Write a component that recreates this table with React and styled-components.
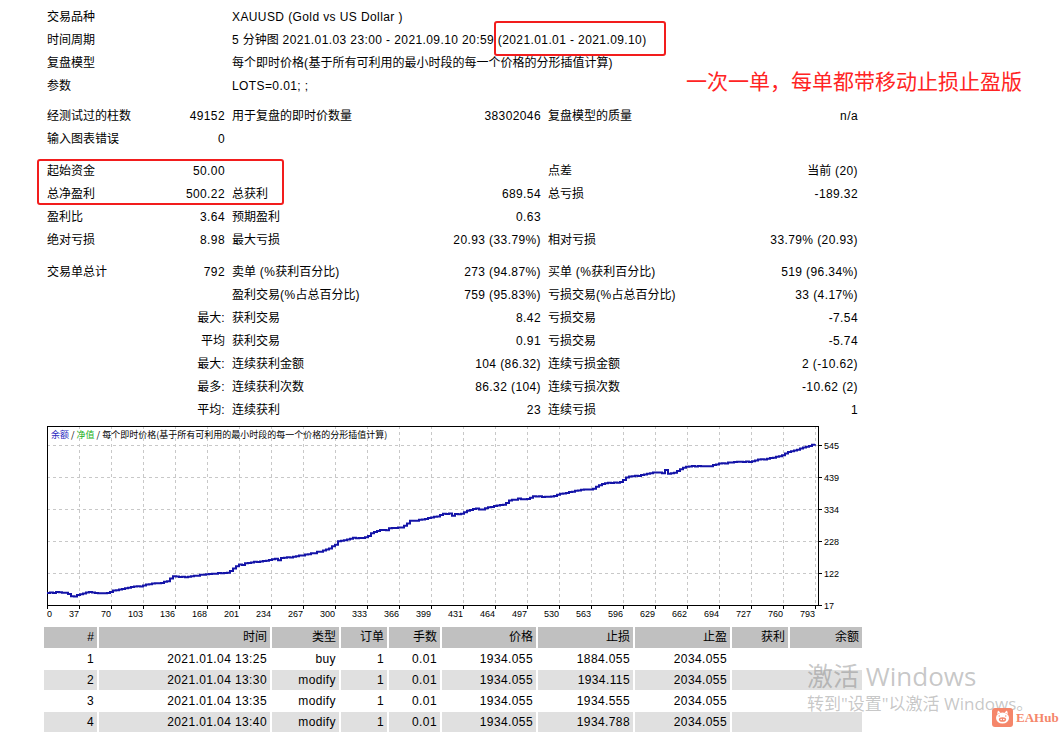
import React from 'react';
import styled, { createGlobalStyle } from 'styled-components';

const Global = createGlobalStyle`
  html, body { margin: 0; padding: 0; background: #fff; }
  body { font-family: "Liberation Sans", "Noto Sans CJK SC", sans-serif; font-size: 12px; color: #000; }
`;

const Page = styled.div`
  position: relative;
  width: 1062px;
  height: 734px;
  overflow: hidden;
  box-sizing: border-box;
  padding: 6px 0 0 44px;
  background: #fff;
`;

const StatsGrid = styled.div`
  display: grid;
  grid-template-columns: 96px 89px 171px 145px 155px 162px;
  width: 818px;
`;

const Cell = styled.div`
  height: 23px;
  line-height: 23px;
  white-space: nowrap;
  grid-column: span ${p => p.$span || 1};
  text-align: ${p => (p.$value ? 'right' : 'left')};
  padding: ${p => (p.$value ? '0 4px 0 0' : '0 0 0 3px')};
`;

const Lat = styled.span`
  letter-spacing: 0.4px;
`;

const Spacer = styled.div`
  grid-column: 1 / -1;
  height: ${p => p.$h}px;
`;

const ChartBox = styled.div`
  margin-top: 2px;
  width: 820px;
  height: 200px;
  svg { display: block; }
`;

const Table = styled.div`
  margin-top: 3px;
  display: grid;
  width: 818px;
  grid-template-columns: 53px 171px 67px 46px 51px 94px 95px 95px 56px 72px;
  column-gap: 2px;
  row-gap: 1px;
`;

const HeadCell = styled.div`
  background: #c0c0c0;
  height: 21px;
  line-height: 21px;
  text-align: right;
  padding-right: 3px;
  white-space: nowrap;
`;

const DataCell = styled.div`
  background: ${p => (p.$alt ? '#e0e0e0' : '#fff')};
  height: 20px;
  line-height: 20px;
  text-align: right;
  padding-right: 3px;
  white-space: nowrap;
  letter-spacing: 0.4px;
  grid-column: span ${p => p.$span || 1};
`;

const RedBox = styled.div`
  position: absolute;
  left: ${p => p.$x}px;
  top: ${p => p.$y}px;
  width: ${p => p.$w}px;
  height: ${p => p.$h}px;
  box-sizing: border-box;
  border: 2px solid #f21d1d;
  border-radius: 3px;
`;

const Note = styled.div`
  position: absolute;
  left: 686px;
  top: 67px;
  font-family: "Noto Sans CJK SC", sans-serif;
  font-size: 21px;
  line-height: 26px;
  color: #ff2424;
  white-space: nowrap;
`;

const Watermark = styled.div`
  position: absolute;
  left: 807px;
  top: 661px;
  font-family: "Open Sans", "Noto Sans CJK SC", sans-serif;
  color: rgba(120, 120, 120, 0.42);
  white-space: nowrap;
`;

const WmTitle = styled.div`
  font-size: 26px;
  line-height: 30px;
`;

const WmSub = styled.div`
  margin-top: 3px;
  font-size: 17px;
  line-height: 20px;
`;

const Brand = styled.div`
  position: absolute;
  left: 992px;
  top: 708px;
  display: flex;
  align-items: center;
  gap: 3px;
`;

const BrandText = styled.span`
  font-family: "Liberation Serif", serif;
  font-weight: bold;
  font-size: 13px;
  color: #f5866a;
`;

const CJK = /([\u3000-\u303f\u4e00-\u9fff\uff00-\uffef]+)/;
function Mixed({ text }) {
  if (!text) return null;
  return text.split(CJK).map((part, i) =>
    part === '' ? null : CJK.test(part) ? <React.Fragment key={i}>{part}</React.Fragment> : <Lat key={i}>{part}</Lat>
  );
}

const L = (t, span) => ({ t, span });
const V = (t, span) => ({ t, span, v: true });

const stats = [
  [L('交易品种', 2), L('XAUUSD (Gold vs US Dollar )', 4)],
  [L('时间周期', 2), L('5 分钟图 2021.01.03 23:00 - 2021.09.10 20:59 (2021.01.01 - 2021.09.10)', 4)],
  [L('复盘模型', 2), L('每个即时价格(基于所有可利用的最小时段的每一个价格的分形插值计算)', 4)],
  [L('参数', 2), L('LOTS=0.01; ;', 4)],
  { spacer: 7 },
  [L('经测试过的柱数'), V('49152'), L('用于复盘的即时价数量'), V('38302046'), L('复盘模型的质量'), V('n/a')],
  [L('输入图表错误'), V('0'), L('', 4)],
  { spacer: 9 },
  [L('起始资金'), V('50.00'), L(''), V(''), L('点差'), V('当前 (20)')],
  [L('总净盈利'), V('500.22'), L('总获利'), V('689.54'), L('总亏损'), V('-189.32')],
  [L('盈利比'), V('3.64'), L('预期盈利'), V('0.63'), L(''), V('')],
  [L('绝对亏损'), V('8.98'), L('最大亏损'), V('20.93 (33.79%)'), L('相对亏损'), V('33.79% (20.93)')],
  { spacer: 9 },
  [L('交易单总计'), V('792'), L('卖单 (%获利百分比)'), V('273 (94.87%)'), L('买单 (%获利百分比)'), V('519 (96.34%)')],
  [L(''), V(''), L('盈利交易(%占总百分比)'), V('759 (95.83%)'), L('亏损交易(%占总百分比)'), V('33 (4.17%)')],
  [L(''), V('最大:'), L('获利交易'), V('8.42'), L('亏损交易'), V('-7.54')],
  [L(''), V('平均'), L('获利交易'), V('0.91'), L('亏损交易'), V('-5.74')],
  [L(''), V('最大:'), L('连续获利金额'), V('104 (86.32)'), L('连续亏损金额'), V('2 (-10.62)')],
  [L(''), V('最多:'), L('连续获利次数'), V('86.32 (104)'), L('连续亏损次数'), V('-10.62 (2)')],
  [L(''), V('平均:'), L('连续获利'), V('23'), L('连续亏损'), V('1')],
];

const headers = ['#', '时间', '类型', '订单', '手数', '价格', '止损', '止盈', '获利', '余额'];
const orders = [
  ['1', '2021.01.04 13:25', 'buy', '1', '0.01', '1934.055', '1884.055', '2034.055'],
  ['2', '2021.01.04 13:30', 'modify', '1', '0.01', '1934.055', '1934.115', '2034.055'],
  ['3', '2021.01.04 13:35', 'modify', '1', '0.01', '1934.055', '1934.555', '2034.055'],
  ['4', '2021.01.04 13:40', 'modify', '1', '0.01', '1934.055', '1934.788', '2034.055'],
];

// chart geometry (local coordinates; chart origin at page x=44, y=424)
const OX = 44, OY = 424;
const PL = 47 - OX, PT = 426 - OY, PR = 818 - OX, PB = 605 - OY;
const xLabels = ['0','37','70','103','136','168','201','234','267','300','333','366','399','431','464','497','530','563','596','629','662','694','727','760','793'];
const yLabels = ['545', '439', '334', '228', '122', '17'];

const anchors = [[47,593],[60,592],[66,593],[73,597],[80,594],[87,592],[100,593],[107,593],[115,590],[127,588],[140,586],[150,584],[160,583],[167,581],[173,576],[180,577],[187,577],[195,576],[207,574],[220,573],[227,573],[232,570],[237,565],[245,563],[253,562],[263,561],[273,559],[283,558],[293,557],[303,555],[313,553],[322,551],[330,548],[337,541],[345,540],[353,538],[360,538],[367,537],[373,532],[382,530],[390,528],[400,528],[405,525],[410,521],[420,520],[430,518],[437,516],[443,514],[452,514],[460,514],[467,511],[477,508],[480,510],[487,508],[493,506],[503,505],[510,500],[518,499],[527,499],[533,496],[543,497],[553,496],[560,494],[570,492],[580,490],[593,489],[598,486],[603,483],[612,483],[620,482],[627,477],[637,476],[647,474],[657,472],[662,473],[665,470],[668,474],[673,473],[680,469],[687,466],[700,466],[710,466],[718,464],[727,463],[738,462],[750,462],[758,460],[767,459],[775,457],[780,456],[787,452],[793,451],[800,449],[808,446],[816,444]];

function interp(x) {
  for (let i = 1; i < anchors.length; i++) {
    const [x1, y1] = anchors[i];
    const [x0, y0] = anchors[i - 1];
    if (x <= x1) return y0 + ((y1 - y0) * (x - x0)) / (x1 - x0);
  }
  return anchors[anchors.length - 1][1];
}

function buildCurve() {
  let seed = 12345;
  const rnd = () => { seed = (seed * 16807) % 2147483647; return (seed - 1) / 2147483646; };
  let d = `M${PL} ${(593 - OY).toFixed(1)}`;
  for (let x = 50; x <= 816; x += 3) {
    let n = (rnd() - 0.5) * 0.8;
    if (rnd() < 0.03) n += 1.5;
    const y = interp(x) + n - OY;
    d += ` H${(x - OX).toFixed(1)} V${y.toFixed(1)}`;
  }
  return d;
}
const curve = buildCurve();

function Chart() {
  const gx = xLabels.map((_, i) => PL + 32 * i);
  const gy = [0, 1, 2, 3, 4, 5].map(i => PB - 32 * (5 - i));
  return (
    <svg width="820" height="200" viewBox="0 0 820 200">
      <rect x="0" y="0" width="820" height="200" fill="#fff" />
      {gx.slice(1).map((x, i) => (
        <line key={'v' + i} x1={x + 0.5} y1={PT} x2={x + 0.5} y2={PB} stroke="#c8c8c8" strokeDasharray="3 3" />
      ))}
      {gy.slice(0, 5).map((y, i) => (
        <line key={'h' + i} x1={PL} y1={y + 0.5} x2={PR} y2={y + 0.5} stroke="#c8c8c8" strokeDasharray="3 3" />
      ))}
      <rect x={PL + 0.5} y={PT + 0.5} width={PR - PL} height={PB - PT} fill="none" stroke="#000" />
      {gx.map((x, i) => (
        <line key={'tx' + i} x1={x + 0.5} y1={PB} x2={x + 0.5} y2={PB + 4} stroke="#000" />
      ))}
      {gy.map((y, i) => (
        <line key={'ty' + i} x1={PR} y1={y + 0.5} x2={PR + 4} y2={y + 0.5} stroke="#000" />
      ))}
      <path d={curve} fill="none" stroke="#1414a8" strokeWidth="2" />
      <g fontFamily="Liberation Sans, sans-serif" fontSize="9" fill="#000">
        {xLabels.map((t, i) => (
          <text key={'lx' + i} x={i === 0 ? PL : gx[i]} y={PB + 12} textAnchor={i === 0 ? 'start' : 'end'}>{t}</text>
        ))}
        {yLabels.map((t, i) => (
          <text key={'ly' + i} x={PR + 6} y={gy[i] + 4}>{t}</text>
        ))}
      </g>
      <text x="7" y="14" fontFamily="Noto Sans CJK SC, sans-serif" fontSize="9" fill="#000">
        <tspan fill="#2828c0">余额</tspan>
        <tspan> / </tspan>
        <tspan fill="#18b018">净值</tspan>
        <tspan> / 每个即时价格(基于所有可利用的最小时段的每一个价格的分形插值计算)</tspan>
      </text>
    </svg>
  );
}

function PigIcon() {
  return (
    <svg width="21" height="19" viewBox="0 0 21 19">
      <rect x="0" y="0" width="21" height="19" rx="3" fill="#f5866a" />
      <path d="M5 6 L6 2.5 L8.5 4.5 Z" fill="#fff" />
      <path d="M16 6 L15 2.5 L12.5 4.5 Z" fill="#fff" />
      <ellipse cx="10.5" cy="10" rx="6.5" ry="5.5" fill="#fff" />
      <ellipse cx="10.5" cy="11.5" rx="3.6" ry="2.3" fill="#f5866a" />
      <circle cx="9.2" cy="11.5" r="0.8" fill="#fff" />
      <circle cx="11.8" cy="11.5" r="0.8" fill="#fff" />
      <circle cx="7.2" cy="8" r="0.7" fill="#f5866a" />
      <circle cx="13.8" cy="8" r="0.7" fill="#f5866a" />
    </svg>
  );
}

export default function App() {
  return (
    <>
      <Global />
      <Page>
        <StatsGrid>
          {stats.map((row, ri) =>
            row.spacer ? (
              <Spacer key={ri} $h={row.spacer} />
            ) : (
              row.map((c, ci) => (
                <Cell key={ri + '-' + ci} $span={c.span} $value={c.v}>
                  <Mixed text={c.t} />
                </Cell>
              ))
            )
          )}
        </StatsGrid>
        <ChartBox>
          <Chart />
        </ChartBox>
        <Table>
          {headers.map(h => (
            <HeadCell key={h}>{h}</HeadCell>
          ))}
          {orders.map((r, ri) =>
            [
              ...r.map((c, ci) => (
                <DataCell key={ri + '-' + ci} $alt={ri % 2 === 1}>{c}</DataCell>
              )),
              <DataCell key={ri + '-last'} $alt={ri % 2 === 1} $span={2} />,
            ]
          )}
        </Table>

        <RedBox $x={494} $y={21} $w={172} $h={35} />
        <RedBox $x={37} $y={159} $w={247} $h={46} />
        <Note>一次一单，每单都带移动止损止盈版</Note>
        <Watermark>
          <WmTitle>激活 Windows</WmTitle>
          <WmSub>转到"设置"以激活 Windows。</WmSub>
        </Watermark>
        <Brand>
          <PigIcon />
          <BrandText>EAHub</BrandText>
        </Brand>
      </Page>
    </>
  );
}
